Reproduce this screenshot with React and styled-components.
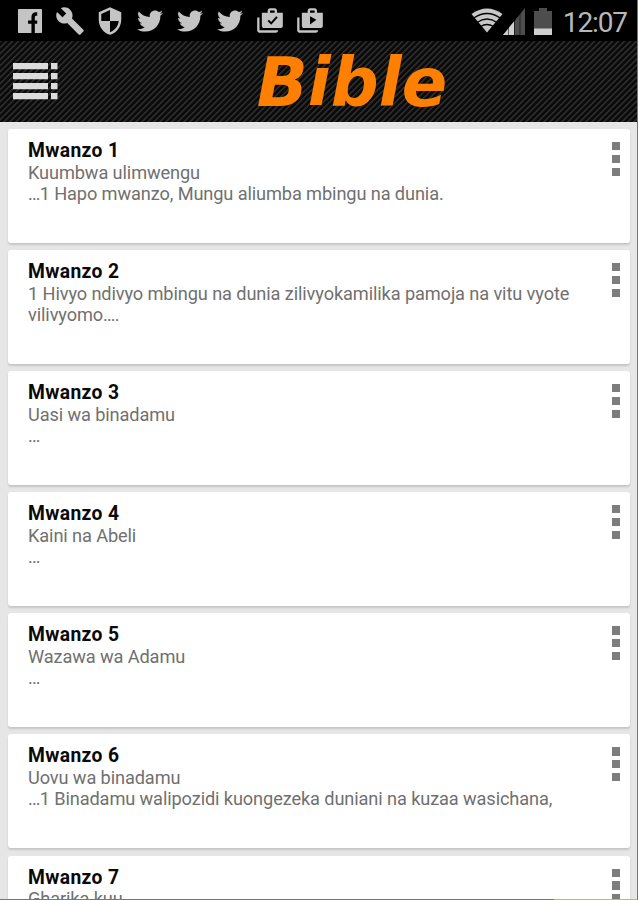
import styled, { createGlobalStyle } from "styled-components";
import { FaTwitter } from "react-icons/fa";
import { MdBuild, MdSecurity, MdShopTwo } from "react-icons/md";

const GlobalStyle = createGlobalStyle`
  * {
    box-sizing: border-box;
  }
  body {
    margin: 0;
    background: #e6e6e6;
    font-family: Roboto, "Liberation Sans", sans-serif;
  }
`;

const Screen = styled.div`
  width: 638px;
  height: 900px;
  overflow: hidden;
  background: #e6e6e6;
  border-right: 1px solid #777;
  position: relative;
`;

const StatusBar = styled.div`
  display: flex;
  justify-content: space-between;
  height: 41px;
  margin-right: -1px;
  padding: 0 11px 0 10px;
  background: #000;
  color: #c4c4c4;
`;

const Notifications = styled.div`
  display: flex;
  align-items: center;
  padding-top: 1px;
`;

const Slot = styled.span`
  display: flex;
  justify-content: center;
  width: 40px;

  svg {
    display: block;
    flex-shrink: 0;
    width: ${({ $size }) => $size}px;
    height: ${({ $size }) => $size}px;
  }
`;

const System = styled.div`
  display: flex;
  align-items: center;
  padding-top: 1px;
`;

const Clock = styled.span`
  margin-left: 11px;
  padding-top: 3px;
  font-size: 28px;
  line-height: 38px;
  letter-spacing: -1.1px;
  color: #b8b8b8;
`;

const Header = styled.header`
  display: grid;
  grid-template-columns: 64px 1fr 64px;
  align-items: center;
  height: 81px;
  margin-right: -1px;
  background: linear-gradient(
      135deg,
      #2b2b2b 0 12%,
      #0a0a0a 20% 42%,
      #2b2b2b 50% 62%,
      #0a0a0a 70% 92%,
      #2b2b2b 100%
    )
    0 0 / 6px 6px;
`;

const MenuButton = styled.button`
  display: block;
  padding: 0 0 2px 13px;
  border: 0;
  background: none;

  svg {
    display: block;
  }
`;

const Title = styled.h1`
  margin: 0;
  padding: 3px 0 0 66px;
  font: italic bold 67px/78px "DejaVu Sans", sans-serif;
  text-align: center;
  color: #ff8000;
`;

const List = styled.main`
  display: flex;
  flex-direction: column;
  gap: 7.5px;
  padding: 7px 7px 0 8px;
`;

const Card = styled.article`
  display: flex;
  flex-shrink: 0;
  justify-content: space-between;
  height: 113.6px;
  padding: 11px 10px 0 20px;
  border-radius: 3px;
  background: #fff;
  box-shadow: 0 2px 2px #c6c6c6;
`;

const Heading = styled.h2`
  margin: 0;
  font-size: 19.3px;
  font-weight: 700;
  line-height: 21.5px;
  letter-spacing: 0.35px;
  color: #0a0a0a;
`;

const Line = styled.p`
  margin: 0;
  font-size: 18.2px;
  line-height: 21.3px;
  letter-spacing: -0.11px;
  white-space: nowrap;
  color: #707070;
`;

const Dots = styled.span`
  letter-spacing: -0.9px;
`;

const More = styled.button`
  display: flex;
  flex-direction: column;
  gap: 4.6px;
  padding: 2px 0 0;
  border: 0;
  background: none;

  i {
    width: 8.2px;
    height: 8.2px;
    background: #7d7d7d;
  }
`;

const BottomEdge = styled.div`
  position: absolute;
  left: 0;
  right: 0;
  bottom: 0;
  height: 1px;
  background: linear-gradient(90deg, #777 554px, #b5c83c 554px);
`;

const Facebook = () => (
  <svg viewBox="0 0 27 27" fill="currentColor">
    <path
      fillRule="evenodd"
      d="M2 1h23q1 0 1 1v23q0 1-1 1H2q-1 0-1-1V2q0-1 1-1zM15 26v-9.700h-3.500V13H15V9.500q0-5 5-5h1V8h-1q-1.500 0-1.500 1.500V13H21v3.300h-2.500V26z"
    />
  </svg>
);

const ShopCheck = () => (
  <svg viewBox="0 0 24 24" fill="currentColor">
    <path d="M3 9H1v11c0 1.110.89 2 2 2h14c1.110 0 2-.89 2-2H3V9zm15-4V3c0-1.110-.89-2-2-2h-4c-1.110 0-2 .89-2 2v2H5v11c0 1.110.89 2 2 2h14c1.110 0 2-.89 2-2V5h-5zm-6-2h4v2h-4V3z" />
    <path d="M10.500 11.500l2.500 2.500 5-5.500" fill="none" stroke="#000" strokeWidth="1.700" />
  </svg>
);

const Wifi = () => (
  <svg width="32" height="26" viewBox="0 0 32 26">
    <path d="M0.500 6Q16-5 31.500 6L16 24.500z" fill="#c8c8c8" />
    <path
      d="M2 10.500q14-10 28 0M6 14.500q10-7 20 0M9.500 18.500q6.500-4 13 0"
      fill="none"
      stroke="#000"
      strokeWidth="1.300"
    />
  </svg>
);

const Signal = () => (
  <svg width="22" height="27" viewBox="0 0 22 27">
    <path d="M0 27L22 0v27z" fill="#4d4d4d" />
    <path d="M0 27L11 13.500V27z" fill="#d0d0d0" />
    <path d="M5.500 18v9M11.500 11v16M17 5v22" stroke="#000" strokeOpacity=".55" />
  </svg>
);

const Battery = styled(({ className }) => (
  <svg className={className} width="18" height="27" viewBox="0 0 18 27">
    <path d="M0 3h5V0h8v3h5v24H0z" fill="#4d4d4d" />
    <path d="M0 20.500h18V27H0z" fill="#cfcfcf" />
  </svg>
))`
  margin-left: 9px;
`;

const MenuIcon = () => (
  <svg width="45" height="38" viewBox="0 0 45 38" fill="#dcdcdc">
    {[1, 11, 21, 31].map((y) => (
      <path key={y} d={`M0 ${y}h35v6.300H0zM38 ${y}h6.500v6.300H38z`} />
    ))}
  </svg>
);

const chapters = [
  { lines: ["Kuumbwa ulimwengu", "...1 Hapo mwanzo, Mungu aliumba mbingu na dunia."] },
  { lines: ["1 Hivyo ndivyo mbingu na dunia zilivyokamilika pamoja na vitu vyote", "vilivyomo...."] },
  { lines: ["Uasi wa binadamu", "..."] },
  { lines: ["Kaini na Abeli", "..."] },
  { lines: ["Wazawa wa Adamu", "..."] },
  { lines: ["Uovu wa binadamu", "...1 Binadamu walipozidi kuongezeka duniani na kuzaa wasichana,"] },
  { lines: ["Gharika kuu"] },
];

// runs of dots are set tighter than the words around them
const renderText = (text) =>
  text.split(/(\.{3,})/).map((part, i) => (i % 2 ? <Dots key={i}>{part}</Dots> : part));

const App = () => {
  return (
    <Screen>
      <GlobalStyle />
      <StatusBar>
        <Notifications>
          <Slot $size={26}>
            <Facebook />
          </Slot>
          <Slot $size={30}>
            <MdBuild />
          </Slot>
          <Slot $size={30}>
            <MdSecurity />
          </Slot>
          <Slot $size={26}>
            <FaTwitter />
          </Slot>
          <Slot $size={26}>
            <FaTwitter />
          </Slot>
          <Slot $size={26}>
            <FaTwitter />
          </Slot>
          <Slot $size={28}>
            <ShopCheck />
          </Slot>
          <Slot $size={28}>
            <MdShopTwo />
          </Slot>
        </Notifications>
        <System>
          <Wifi />
          <Signal />
          <Battery />
          <Clock>12:07</Clock>
        </System>
      </StatusBar>
      <Header>
        <MenuButton>
          <MenuIcon />
        </MenuButton>
        <Title>Bible</Title>
      </Header>
      <List>
        {chapters.map(({ lines }, i) => (
          <Card key={i}>
            <div>
              <Heading>Mwanzo {i + 1}</Heading>
              {lines.map((line) => (
                <Line key={line}>{renderText(line)}</Line>
              ))}
            </div>
            <More>
              <i />
              <i />
              <i />
            </More>
          </Card>
        ))}
      </List>
      <BottomEdge />
    </Screen>
  );
};

export default App;
